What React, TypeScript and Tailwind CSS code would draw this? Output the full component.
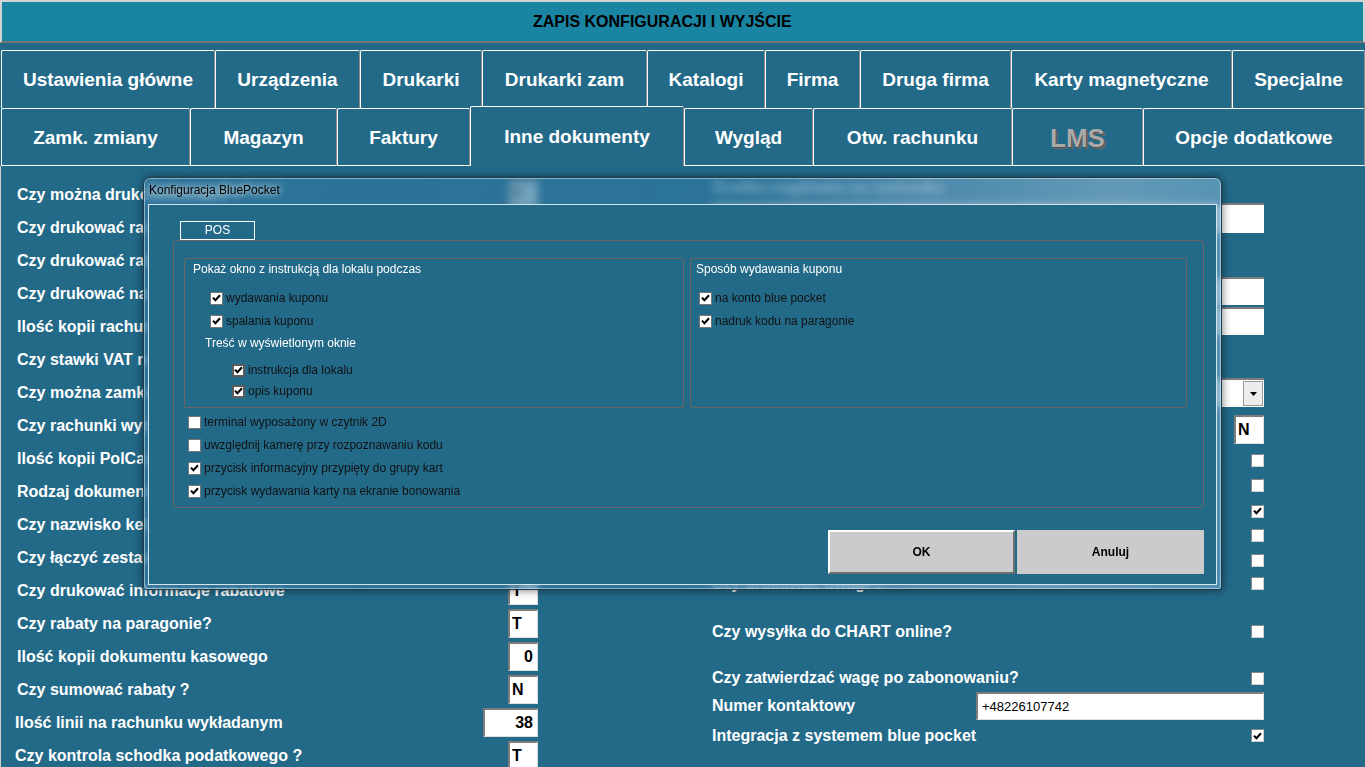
import React from 'react';

function Tick() {
  return (
    <svg width="9" height="8" viewBox="0 0 9 8" className="block">
      <path d="M1 3.6 L3.4 6.2 L8 1.2" fill="none" stroke="#000" strokeWidth="2" />
    </svg>
  );
}

function Cb({ checked, heavy }: { checked?: boolean; heavy?: boolean }) {
  return (
    <span
      className={
        heavy
          ? 'w-[13px] h-[13px] shrink-0 bg-white border-2 border-[#5c5c5c] flex items-center justify-center'
          : 'w-[13px] h-[13px] shrink-0 bg-white border border-[#767676] flex items-center justify-center'
      }
    >
      {checked ? <Tick /> : null}
    </span>
  );
}

function PageCb({ checked }: { checked?: boolean }) {
  return (
    <span className="w-[13px] h-[13px] shrink-0 bg-white border border-[#858585] border-b-[#cfcfcf] border-r-[#cfcfcf] flex items-center justify-center">
      {checked ? <Tick /> : null}
    </span>
  );
}

function DRow({ text, checked, heavy, cls }: { text: string; checked?: boolean; heavy?: boolean; cls: string }) {
  return (
    <div className={`flex items-center h-[14px] ${cls}`}>
      <Cb checked={checked} heavy={heavy} />
      <span className="ml-[3px] text-[#111] leading-[14px] whitespace-nowrap">{text}</span>
    </div>
  );
}

function Val({ v, wide, right }: { v: string; wide?: boolean; right?: boolean }) {
  return (
    <div
      className={`h-[29px] ${wide ? 'w-[55px]' : 'w-[30px]'} shrink-0 bg-white border-t-2 border-l-2 border-[#7d7d7d] border-r border-b border-r-[#dedede] border-b-[#dedede] flex items-center ${
        right ? 'justify-end pr-[4px]' : 'pl-[2px]'
      } text-[16px] font-bold text-black`}
    >
      {v}
    </div>
  );
}

const row1: [string, string][] = [
  ['Ustawienia główne', 'w-[214px]'],
  ['Urządzenia', 'w-[145px]'],
  ['Drukarki', 'w-[122px]'],
  ['Drukarki zam', 'w-[165px]'],
  ['Katalogi', 'w-[118px]'],
  ['Firma', 'w-[95px]'],
  ['Druga firma', 'w-[151px]'],
  ['Karty magnetyczne', 'w-[221px]'],
  ['Specjalne', 'w-[133px]'],
];

const row2: [string, string][] = [
  ['Zamk. zmiany', 'w-[189px]'],
  ['Magazyn', 'w-[147px]'],
  ['Faktury', 'w-[133px]'],
  ['Inne dokumenty', 'w-[214px]'],
  ['Wygląd', 'w-[129px]'],
  ['Otw. rachunku', 'w-[199px]'],
  ['LMS', 'w-[131px]'],
  ['Opcje dodatkowe', 'w-[222px]'],
];

const leftRows: { label: string; v: string; wide?: boolean; right?: boolean; shift?: boolean }[] = [
  { label: 'Czy można drukować kopię ?', v: 'T' },
  { label: 'Czy drukować rachunek kelnerski ?', v: 'T' },
  { label: 'Czy drukować rabaty na rachunku ?', v: 'N' },
  { label: 'Czy drukować nazwę kelnera ?', v: 'T' },
  { label: 'Ilość kopii rachunku', v: '0', right: true },
  { label: 'Czy stawki VAT na rachunku ?', v: 'T' },
  { label: 'Czy można zamknąć rachunek bez płatności ?', v: 'N' },
  { label: 'Czy rachunki wydawane przez kuchnię ?', v: 'N' },
  { label: 'Ilość kopii PolCard', v: '0', right: true },
  { label: 'Rodzaj dokumentu sprzedaży', v: 'P' },
  { label: 'Czy nazwisko kelnera na paragonie ?', v: 'T' },
  { label: 'Czy łączyć zestawy na rachunku ?', v: 'N' },
  { label: 'Czy drukować informacje rabatowe', v: 'T' },
  { label: 'Czy rabaty na paragonie?', v: 'T' },
  { label: 'Ilość kopii dokumentu kasowego', v: '0', right: true },
  { label: 'Czy sumować rabaty ?', v: 'N' },
  { label: 'Ilość linii na rachunku wykładanym', v: '38', wide: true, right: true, shift: true },
  { label: 'Czy kontrola schodka podatkowego ?', v: 'T', shift: true },
];

const tabBase =
  'shrink-0 flex items-center justify-center pt-[2px] border-t border-l border-white border-r border-r-[#8d8d8d] rounded-t-[2px] text-white font-bold text-[19px] whitespace-nowrap';

export default function App() {
  return (
    <div className="relative w-[1365px] h-[767px] overflow-hidden bg-[#236a89] font-['Liberation_Sans',Arial,sans-serif]">
      {/* header */}
      <div className="h-[43px] bg-[#1a85a3] border-t-2 border-l-2 border-r-2 border-[#d4d4d4] border-b-2 border-b-[#767676] flex items-center">
        <span className="pl-[531px] text-[16px] font-bold text-black">ZAPIS KONFIGURACJI I WYJŚCIE</span>
      </div>

      {/* tab row 1 */}
      <div className="mt-[7px] h-[58px] flex pl-[1px]">
        {row1.map(([t, w]) => (
          <div key={t} className={`${tabBase} ${w} h-[58px]`}>
            {t}
          </div>
        ))}
      </div>

      {/* tab row 2 */}
      <div className="-mt-[2px] h-[60px] flex items-end pl-[1px]">
        {row2.map(([t, w]) => {
          if (t === 'Inne dokumenty') {
            return (
              <div key={t} className={`${tabBase} ${w} h-[60px] bg-[#236a89]`}>
                {t}
              </div>
            );
          }
          if (t === 'LMS') {
            return (
              <div key={t} className={`${tabBase} ${w} h-[58px] border-b border-b-white`}>
                <span className="text-[26px] text-[#a9a9a9] [text-shadow:1px_1px_0_#4f4f4f,2px_2px_0_#6a6a6a]">LMS</span>
              </div>
            );
          }
          return (
            <div key={t} className={`${tabBase} ${w} h-[58px] border-b border-b-white`}>
              {t}
            </div>
          );
        })}
      </div>

      {/* content */}
      <div className="flex border-l border-[#cfcfcf] h-[620px]">
        {/* left column */}
        <div className="w-[537px] pl-[16px] pt-[12px] flex flex-col">
          {leftRows.map((r) => (
            <div key={r.label} className="h-[33px] flex items-center justify-between">
              <span className={`text-white font-bold text-[16px] whitespace-nowrap ${r.shift ? '-ml-[2px]' : ''}`}>{r.label}</span>
              <Val v={r.v} wide={r.wide} right={r.right} />
            </div>
          ))}
        </div>

        {/* right column */}
        <div className="ml-[174px] w-[552px] pt-[12px] flex flex-col text-white font-bold text-[16px]">
          <div className="h-[20px] flex items-center">Grafika nagłówka na rachunku</div>
          <div className="mt-[5px] h-[30px] bg-white border-t-2 border-[#7d7d7d]" />
          <div className="h-[44px] flex items-center">Grafika stopki na rachunku</div>
          <div className="h-[28px] bg-white border-t-2 border-[#7d7d7d]" />
          <div className="mt-[2px] h-[28px] bg-white border-t-2 border-[#7d7d7d]" />
          <div className="h-[43px] flex items-center">Drukarka fiskalna</div>
          <div className="h-[29px] flex justify-between items-center">
            <span>Rodzaj drukarki</span>
            <div className="w-[288px] h-[29px] bg-white border-t-2 border-[#7d7d7d] flex justify-end items-center pr-[1px]">
              <div className="w-[20px] h-[25px] bg-[#ececec] border border-[#9a9a9a] flex items-center justify-center">
                <svg width="7" height="4" viewBox="0 0 7 4"><path d="M0 0 H7 L3.5 4 Z" fill="#000" /></svg>
              </div>
            </div>
          </div>
          <div className="mt-[8px] h-[29px] flex justify-between items-center">
            <span>Czy drukować kod kreskowy ?</span>
            <Val v="N" />
          </div>
          <div className="mt-[4px] h-[25px] flex justify-between items-center"><span>Czy drukować logo ?</span><PageCb /></div>
          <div className="h-[25px] flex justify-between items-center"><span>Czy drukować stopkę ?</span><PageCb /></div>
          <div className="h-[26px] flex justify-between items-center"><span>Czy drukować numer stolika ?</span><PageCb checked /></div>
          <div className="h-[23px] flex justify-between items-center"><span>Czy drukować godzinę ?</span><PageCb /></div>
          <div className="h-[27px] flex justify-between items-center"><span>Czy drukować NIP ?</span><PageCb /></div>
          <div className="h-[19px] flex justify-between items-center"><span>Czy drukować uwagi ?</span><PageCb /></div>
          <div className="mt-[22px] h-[33px] flex justify-between items-center">
            <span>Czy wysyłka do CHART online?</span>
            <PageCb />
          </div>
          <div className="mt-[16px] h-[28px] flex justify-between items-center">
            <span>Czy zatwierdzać wagę po zabonowaniu?</span>
            <PageCb />
          </div>
          <div className="h-[28px] flex justify-between items-center">
            <span>Numer kontaktowy</span>
            <div className="w-[288px] h-[28px] bg-white border-t-2 border-l-2 border-[#7d7d7d] border-r border-b border-r-[#dedede] border-b-[#dedede] flex items-center pl-[4px] text-[13px] font-normal text-black">
              +48226107742
            </div>
          </div>
          <div className="mt-[2px] h-[27px] flex justify-between items-center">
            <span>Integracja z systemem blue pocket</span>
            <PageCb checked />
          </div>
        </div>
      </div>

      {/* dialog */}
      <div className="absolute left-[143px] top-[177px] w-[1079px] h-[413px] rounded-t-[7px] rounded-b-[3px] border border-[#1a3a4e] backdrop-blur-[4px] bg-[linear-gradient(100deg,rgba(48,118,158,0.7)_0%,rgba(48,120,160,0.66)_52%,rgba(95,150,185,0.7)_68%,rgba(120,170,200,0.75)_85%,rgba(95,155,190,0.75)_100%)] shadow-[0_0_10px_rgba(0,0,0,0.55),inset_0_0_0_1px_rgba(255,255,255,0.45)] flex flex-col text-[12px]">
        <div className="h-[26px] flex items-center pl-[5px] pb-[3px] text-black [text-shadow:0_0_6px_rgba(255,255,255,0.9),0_0_12px_rgba(255,255,255,0.6)]">
          Konfiguracja BluePocket
        </div>
        <div className="flex-1 mx-[4px] mb-[4px] bg-[#236a89] border border-[#d6e4ec] flex flex-col pt-[16px] pl-[24px] pr-[12px]">
          {/* POS tab */}
          <div className="ml-[7px] w-[75px] h-[19px] border border-white text-white flex items-center justify-center leading-none pb-[2px]">
            POS
          </div>
          {/* panel */}
          <div className="h-[268px] border border-[#6b6461] rounded-[3px] flex flex-col">
            <div className="flex pl-[10px] pt-[17px] gap-[6px]">
              {/* group 1 */}
              <div className="w-[500px] h-[150px] border border-[#6b6461] rounded-[2px] flex flex-col pl-[8px] pt-[3px]">
                <div className="text-white leading-[14px] h-[14px]">Pokaż okno z instrukcją dla lokalu podczas</div>
                <DRow text="wydawania kuponu" checked cls="mt-[15px] ml-[17px]" />
                <DRow text="spalania kuponu" checked cls="mt-[9px] ml-[17px]" />
                <div className="mt-[8px] ml-[12px] h-[14px] leading-[14px] text-white">Treść w wyświetlonym oknie</div>
                <DRow text="instrukcja dla lokalu" checked heavy cls="mt-[13px] ml-[39px]" />
                <DRow text="opis kuponu" checked heavy cls="mt-[7px] ml-[39px]" />
              </div>
              {/* group 2 */}
              <div className="w-[497px] h-[150px] border border-[#6b6461] rounded-[2px] flex flex-col pl-[5px] pt-[3px]">
                <div className="text-white leading-[14px] h-[14px]">Sposób wydawania kuponu</div>
                <DRow text="na konto blue pocket" checked cls="mt-[15px] ml-[3px]" />
                <DRow text="nadruk kodu na paragonie" checked cls="mt-[9px] ml-[3px]" />
              </div>
            </div>
            <div className="flex flex-col pl-[14px]">
              <DRow text="terminal wyposażony w czytnik 2D" cls="mt-[7px]" />
              <DRow text="uwzględnij kamerę przy rozpoznawaniu kodu" cls="mt-[9px]" />
              <DRow text="przycisk informacyjny przypięty do grupy kart" checked cls="mt-[9px]" />
              <DRow text="przycisk wydawania karty na ekranie bonowania" checked cls="mt-[9px]" />
            </div>
          </div>
          {/* buttons */}
          <div className="mt-[22px] flex justify-end gap-[2px]">
            <div className="w-[187px] h-[44px] bg-[#cbcbcd] border-2 border-t-white border-l-white border-r-[#6e6e6e] border-b-[#6e6e6e] flex items-center justify-center font-bold text-black">
              OK
            </div>
            <div className="w-[187px] h-[44px] bg-[#cbcbcd] flex items-center justify-center font-bold text-black">
              Anuluj
            </div>
          </div>
        </div>
      </div>
    </div>
  );
}
